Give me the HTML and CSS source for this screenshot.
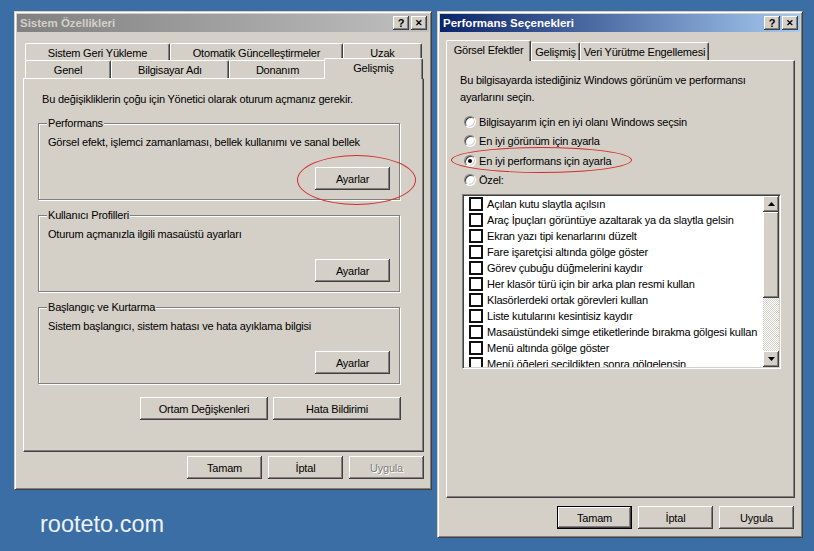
FILE: index.html
```html
<!DOCTYPE html>
<html lang="tr">
<head>
	<meta charset="UTF-8" />
	<title>Sistem Özellikleri</title>
	<link rel="stylesheet" href="styles.css">
</head>
<body>
	<div class="desktop">
		<div class="desktop__left">
			<div class="window window--system">
				<div class="titlebar titlebar--inactive">
					<span class="titlebar__text">Sistem Özellikleri</span>
					<span class="titlebar__btn">?</span>
					<span class="titlebar__btn titlebar__btn--close">&#x2715;</span>
				</div>
				<div class="window__body system__body">
					<div class="tabs tabs--two-rows">
						<div class="tabs__row tabs__row--back">
							<div class="tab tab--restore">Sistem Geri Yükleme</div>
							<div class="tab tab--update">Otomatik Güncelleştirmeler</div>
							<div class="tab tab--remote">Uzak</div>
						</div>
						<div class="tabs__row tabs__row--front">
							<div class="tab tab--general">Genel</div>
							<div class="tab tab--name">Bilgisayar Adı</div>
							<div class="tab tab--hardware">Donanım</div>
							<div class="tab tab--advanced tab--active">Gelişmiş</div>
						</div>
					</div>
					<div class="panel system__panel">
						<p class="system__intro">Bu değişikliklerin çoğu için Yönetici olarak oturum açmanız gerekir.</p>

						<div class="group">
							<span class="group__legend">Performans</span>
							<p class="group__text">Görsel efekt, işlemci zamanlaması, bellek kullanımı ve sanal bellek</p>
							<button class="btn group__btn">Ayarlar</button>
						</div>

						<div class="group">
							<span class="group__legend">Kullanıcı Profilleri</span>
							<p class="group__text">Oturum açmanızla ilgili masaüstü ayarları</p>
							<button class="btn group__btn">Ayarlar</button>
						</div>

						<div class="group">
							<span class="group__legend">Başlangıç ve Kurtarma</span>
							<p class="group__text">Sistem başlangıcı, sistem hatası ve hata ayıklama bilgisi</p>
							<button class="btn group__btn">Ayarlar</button>
						</div>

						<div class="system__extra">
							<button class="btn btn--wide">Ortam Değişkenleri</button>
							<button class="btn btn--wide">Hata Bildirimi</button>
						</div>
					</div>
					<div class="window__buttons system__buttons">
						<button class="btn">Tamam</button>
						<button class="btn">İptal</button>
						<button class="btn btn--disabled">Uygula</button>
					</div>
				</div>
			</div>
			<div class="watermark">rooteto.com</div>
		</div>

		<div class="window window--perf">
			<div class="titlebar titlebar--active">
				<span class="titlebar__text">Performans Seçenekleri</span>
				<span class="titlebar__btn">?</span>
				<span class="titlebar__btn titlebar__btn--close">&#x2715;</span>
			</div>
			<div class="window__body perf__body">
				<div class="tabs">
					<div class="tabs__row tabs__row--single">
						<div class="tab tab--visual tab--active">Görsel Efektler</div>
						<div class="tab tab--adv2">Gelişmiş</div>
						<div class="tab tab--dep">Veri Yürütme Engellemesi</div>
					</div>
				</div>
				<div class="panel perf__panel">
					<p class="perf__intro">Bu bilgisayarda istediğiniz Windows görünüm ve performansı<br>ayarlarını seçin.</p>

					<div class="radios">
						<div class="radio"><span class="radio__dot"></span>Bilgisayarım için en iyi olanı Windows seçsin</div>
						<div class="radio"><span class="radio__dot"></span>En iyi görünüm için ayarla</div>
						<div class="radio"><span class="radio__dot radio__dot--on"></span>En iyi performans için ayarla</div>
						<div class="radio"><span class="radio__dot"></span>Özel:</div>
					</div>

					<div class="listbox">
						<div class="listbox__items">
							<div class="listbox__item"><span class="check"></span>Açılan kutu slaytla açılsın</div>
							<div class="listbox__item"><span class="check"></span>Araç İpuçları görüntüye azaltarak ya da slaytla gelsin</div>
							<div class="listbox__item"><span class="check"></span>Ekran yazı tipi kenarlarını düzelt</div>
							<div class="listbox__item"><span class="check"></span>Fare işaretçisi altında gölge göster</div>
							<div class="listbox__item"><span class="check"></span>Görev çubuğu düğmelerini kaydır</div>
							<div class="listbox__item"><span class="check"></span>Her klasör türü için bir arka plan resmi kullan</div>
							<div class="listbox__item"><span class="check"></span>Klasörlerdeki ortak görevleri kullan</div>
							<div class="listbox__item"><span class="check"></span>Liste kutularını kesintisiz kaydır</div>
							<div class="listbox__item"><span class="check"></span>Masaüstündeki simge etiketlerinde bırakma gölgesi kullan</div>
							<div class="listbox__item"><span class="check"></span>Menü altında gölge göster</div>
							<div class="listbox__item"><span class="check"></span>Menü öğeleri seçildikten sonra gölgelensin</div>
						</div>
						<div class="scrollbar">
							<div class="scrollbar__btn">
								<svg width="7" height="4" viewBox="0 0 7 4"><polygon points="3.5,0 7,4 0,4" fill="#000"/></svg>
							</div>
							<div class="scrollbar__thumb"></div>
							<div class="scrollbar__track"></div>
							<div class="scrollbar__btn">
								<svg width="7" height="4" viewBox="0 0 7 4"><polygon points="0,0 7,0 3.5,4" fill="#000"/></svg>
							</div>
						</div>
					</div>
				</div>
				<div class="window__buttons perf__buttons">
					<button class="btn btn--default">Tamam</button>
					<button class="btn">İptal</button>
					<button class="btn">Uygula</button>
				</div>
			</div>
		</div>

		<!-- red marker circles drawn over the screenshot -->
		<div class="marker marker--button"></div>
		<div class="marker marker--radio"></div>
	</div>
</body>
</html>
```

FILE: styles.css
```css
* {
	box-sizing: border-box;
}

html,
body {
	margin: 0;
	padding: 0;
}

body {
	background-color: #3a6ea5;
	font-family: "Liberation Sans", Arial, sans-serif;
	font-size: 11px;
	letter-spacing: -0.2px;
	color: #000;
}

p {
	margin: 0;
}

.desktop {
	position: relative;
	width: 814px;
	height: 551px;
	display: flex;
	align-items: flex-start;
	gap: 5px;
	padding: 11px 0 0 14px;
}

.desktop__left {
	display: flex;
	flex-direction: column;
}

.watermark {
	margin: 21px 0 0 26px;
	font-family: "Liberation Sans", Arial, sans-serif;
	font-size: 23.5px;
	line-height: 26px;
	letter-spacing: 0;
	color: #eef2f8;
}

/* window chrome */

.window {
	background-color: #d4d0c8;
	border: 1px solid;
	border-color: #d4d0c8 #404040 #404040 #d4d0c8;
	box-shadow: inset 1px 1px #fff, inset -1px -1px #808080;
	padding: 2px;
}

.window--system {
	width: 418px;
	height: 479px;
}

.window--perf {
	width: 366px;
	height: 527px;
}

.titlebar {
	height: 18px;
	display: flex;
	align-items: center;
	padding: 0 2px 0 3px;
}

.titlebar--inactive {
	background: linear-gradient(to right, #808080, #c0c0c0);
	color: #d4d0c8;
}

.titlebar--active {
	background: linear-gradient(to right, #0a246a, #a6caf0);
	color: #fff;
}

.titlebar__text {
	flex: 1;
	font-weight: bold;
	font-size: 11.5px;
	letter-spacing: 0;
}

.titlebar__btn {
	width: 16px;
	height: 14px;
	margin-left: 2px;
	background-color: #d4d0c8;
	box-shadow: inset -1px -1px #404040, inset 1px 1px #fff, inset -2px -2px #808080;
	color: #000;
	font-weight: bold;
	font-size: 11px;
	line-height: 14px;
	letter-spacing: 0;
	text-align: center;
}

.titlebar__btn--close {
	font-size: 9px;
}

/* tabs */

.system__body .tabs {
	padding-top: 1px;
}

.tabs__row {
	display: flex;
	margin-left: 2px;
}

.tabs__row--back {
	height: 17px;
}

.tabs__row--front {
	height: 18px;
	align-items: flex-end;
}

.tabs__row--single {
	height: 18px;
	align-items: flex-end;
	margin-left: 0;
}

.tab {
	height: 100%;
	display: flex;
	align-items: center;
	justify-content: center;
	background-color: #d4d0c8;
	border-top: 1px solid #fff;
	border-left: 1px solid #fff;
	border-right: 1px solid #404040;
	box-shadow: inset -1px 0 #808080;
	border-radius: 2px 2px 0 0;
	white-space: nowrap;
}

.tabs__row--back .tab {
	align-items: flex-start;
	padding-top: 3px;
}

.tab--active {
	position: relative;
	z-index: 1;
	height: 21px;
	margin-bottom: -1px;
	align-items: flex-start;
	padding-top: 3px;
}

.tab--restore { width: 145px; }
.tab--update { width: 173px; }
.tab--remote { width: 79px; }
.tab--general { width: 86px; }
.tab--name { width: 118px; }
.tab--hardware { width: 97px; }
.tab--advanced { width: 99px; margin-left: -2px; }

.tab--visual { width: 85px; }
.tab--adv2 { width: 49px; height: 18px; }
.tab--dep { width: 129px; height: 18px; }

.panel {
	border: 1px solid;
	border-color: #fff #404040 #404040 #fff;
	box-shadow: inset -1px -1px #808080;
}

/* sistem özellikleri */

.system__body {
	padding: 10px 0 0 6px;
}

.system__panel {
	width: 401px;
	height: 374px;
	padding: 14px 0 0 14px;
}

.system__intro {
	margin-left: 4px;
	line-height: 13px;
	margin-bottom: 17px;
}

.group {
	width: 362px;
	height: 77px;
	display: flex;
	flex-direction: column;
	padding: 0 9px 9px 9px;
	border: 1px solid #808080;
	box-shadow: inset 1px 1px #fff, 1px 1px #fff;
	margin-bottom: 15px;
}

.group__legend {
	align-self: flex-start;
	margin: -7px 0 0 -1px;
	padding: 0 1px;
	line-height: 13px;
	background-color: #d4d0c8;
}

.group__text {
	margin-top: 6px;
	line-height: 13px;
}

.group__btn {
	margin-top: auto;
	align-self: flex-end;
	width: 73px;
	height: 22px;
}

.system__extra {
	display: flex;
	justify-content: flex-end;
	gap: 5px;
	width: 363px;
	margin-top: -2px;
}

.window__buttons {
	display: flex;
	justify-content: flex-end;
	gap: 6px;
}

.system__buttons {
	width: 401px;
	margin-top: 4px;
}

/* performans seçenekleri */

.perf__body {
	padding: 10px 0 0 6px;
}

.perf__panel {
	width: 349px;
	height: 438px;
	padding: 11px 0 0 13px;
}

.perf__intro {
	line-height: 17px;
}

.radios {
	margin: 6px 0 0 4px;
}

.radio {
	height: 19.5px;
	display: flex;
	align-items: center;
}

.radio__dot {
	position: relative;
	width: 12px;
	height: 12px;
	margin-right: 3px;
	border-radius: 50%;
	background-color: #fff;
	border: 1px solid;
	border-color: #808080 #fff #fff #808080;
	box-shadow: inset 1px 1px #404040, inset -1px -1px #d4d0c8;
}

.radio__dot--on::after {
	content: "";
	position: absolute;
	left: 3px;
	top: 3px;
	width: 4px;
	height: 4px;
	border-radius: 50%;
	background-color: #000;
}

.listbox {
	display: flex;
	width: 319px;
	height: 175px;
	margin: 4px 0 0 2px;
	padding: 1px;
	background-color: #fff;
	border: 1px solid;
	border-color: #808080 #fff #fff #808080;
	box-shadow: inset 1px 1px #404040, inset -1px -1px #d4d0c8;
}

.listbox__items {
	flex: 1;
	overflow: hidden;
}

.listbox__item {
	height: 16px;
	display: flex;
	align-items: center;
	padding-left: 5px;
	white-space: nowrap;
}

.check {
	width: 14px;
	height: 14px;
	margin-right: 4px;
	border: 2px solid #111;
	background-color: #fff;
	flex-shrink: 0;
}

.scrollbar {
	width: 16px;
	display: flex;
	flex-direction: column;
}

.scrollbar__btn {
	height: 16px;
	display: flex;
	align-items: center;
	justify-content: center;
	background-color: #d4d0c8;
	box-shadow: inset -1px -1px #404040, inset 1px 1px #fff, inset -2px -2px #808080;
}

.scrollbar__thumb {
	height: 86px;
	background-color: #d4d0c8;
	box-shadow: inset -1px -1px #404040, inset 1px 1px #fff, inset -2px -2px #808080;
}

.scrollbar__track {
	flex: 1;
	background-color: #eeede9;
	background-image: repeating-conic-gradient(#d4d0c8 0 25%, #fff 0 50%);
	background-size: 2px 2px;
}

.perf__buttons {
	width: 349px;
	margin-top: 8px;
	padding-right: 1px;
}

/* buttons */

.btn {
	width: 75px;
	height: 23px;
	padding: 0;
	font-family: "Liberation Sans", Arial, sans-serif;
	font-size: 11px;
	letter-spacing: -0.2px;
	color: #000;
	background-color: #d4d0c8;
	border: none;
	box-shadow: inset -1px -1px #404040, inset 1px 1px #fff, inset -2px -2px #808080;
}

.btn--wide {
	width: 128px;
}

.btn--default {
	border: 1px solid #000;
}

.btn--disabled {
	color: #808080;
	text-shadow: 1px 1px #fff;
}

/* red annotation ellipses */

.marker {
	position: absolute;
	border: 1px solid #d42b2b;
	border-radius: 50%;
}

.marker--button {
	left: 297px;
	top: 155px;
	width: 119px;
	height: 50px;
}

.marker--radio {
	left: 451px;
	top: 147px;
	width: 181px;
	height: 26px;
}
```
